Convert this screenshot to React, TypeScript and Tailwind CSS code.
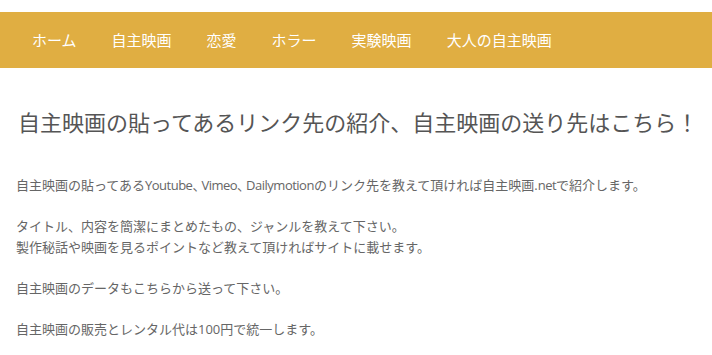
import React from 'react';

const NAV_ITEMS = ['ホーム', '自主映画', '恋愛', 'ホラー', '実験映画', '大人の自主映画'];

function Latin({ children }: { children: React.ReactNode }) {
  return <span className="tracking-[-0.5px]">{children}</span>;
}

function Comma() {
  return <span className="mr-[-4px]">、</span>;
}

export default function App() {
  return (
    <div
      className="min-h-screen bg-white"
      style={{ fontFamily: '"Open Sans", "Noto Sans CJK JP", sans-serif' }}
    >
      <div className="pt-3">
        <nav className="h-14 bg-[#e0ae42] flex items-center pl-8 gap-[35px]">
          {NAV_ITEMS.map((item) => (
            <a key={item} href="#" className="text-[15px] text-white leading-none">
              {item}
            </a>
          ))}
        </nav>
      </div>

      <main className="px-4">
        <h1 className="mt-[40px] pl-[2px] text-[22px] leading-[28px] text-[#555] whitespace-nowrap">
          自主映画の貼ってあるリンク先の紹介、自主映画の送り先はこちら！
        </h1>

        <div className="mt-[39px] text-[13px] leading-[21px] text-[#666] space-y-[20px]">
          <p>
            自主映画の貼ってある<Latin>Youtube</Latin>
            <Comma />
            <Latin>Vimeo</Latin>
            <Comma />
            <Latin>Dailymotion</Latin>のリンク先を教えて頂ければ自主映画.<Latin>net</Latin>で紹介します。
          </p>
          <p>
            タイトル、内容を簡潔にまとめたもの、ジャンルを教えて下さい。
            <br />
            製作秘話や映画を見るポイントなど教えて頂ければサイトに載せます。
          </p>
          <p>自主映画のデータもこちらから送って下さい。</p>
          <p>自主映画の販売とレンタル代は100円で統一します。</p>
        </div>
      </main>
    </div>
  );
}
